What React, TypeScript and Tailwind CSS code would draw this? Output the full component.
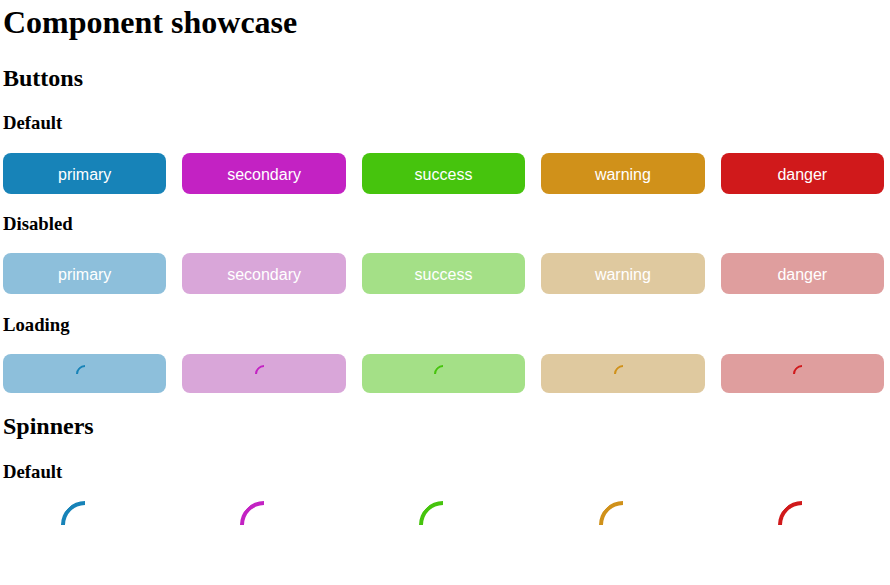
const variants = [
  { name: "primary", bg: "bg-[#1783b8]", soft: "bg-[#8dbfdb]", arc: "border-t-[#1783b8]" },
  { name: "secondary", bg: "bg-[#c322c3]", soft: "bg-[#d9a6d9]", arc: "border-t-[#c322c3]" },
  { name: "success", bg: "bg-[#46c40d]", soft: "bg-[#a4e087]", arc: "border-t-[#46c40d]" },
  { name: "warning", bg: "bg-[#d0911a]", soft: "bg-[#dfc99f]", arc: "border-t-[#d0911a]" },
  { name: "danger", bg: "bg-[#d0191b]", soft: "bg-[#df9e9e]", arc: "border-t-[#d0191b]" },
];

function Spinner({ arc, size }: { arc: string; size: "sm" | "lg" }) {
  const dims = size === "lg" ? "w-12 h-12 border-4" : "w-[18px] h-[18px] border-2";
  return <div className={`${dims} rounded-full border-transparent ${arc} -rotate-45`} />;
}

function Row({ children, className = "" }: { children: React.ReactNode; className?: string }) {
  return <div className={`grid grid-cols-5 gap-4 ${className}`}>{children}</div>;
}

export default function App() {
  const h3 = "text-[18.72px] leading-[19px] font-bold";
  const btn = "flex items-center justify-center rounded-lg text-white text-base font-['Liberation_Sans',Arial,sans-serif]";

  return (
    <div className="pl-[3px] pr-[6px] text-black font-['Liberation_Serif','Times_New_Roman',serif]">
      <h1 className="mt-[6px] text-[32px] leading-[32px] font-bold">Component showcase</h1>

      <h2 className="mt-[28px] text-2xl leading-6 font-bold">Buttons</h2>

      <h3 className={`mt-[23px] ${h3}`}>Default</h3>
      <Row className="mt-[21px]">
        {variants.map(v => (
          <button key={v.name} className={`${btn} ${v.bg} h-[41px] pt-[2px]`}>{v.name}</button>
        ))}
      </Row>

      <h3 className={`mt-[20px] ${h3}`}>Disabled</h3>
      <Row className="mt-[20px]">
        {variants.map(v => (
          <button key={v.name} disabled className={`${btn} ${v.soft} h-[41px] pt-[2px] text-[#fbfbfb]`}>{v.name}</button>
        ))}
      </Row>

      <h3 className={`mt-[21px] ${h3}`}>Loading</h3>
      <Row className="mt-[20px]">
        {variants.map(v => (
          <button key={v.name} disabled className={`${btn} ${v.soft} h-[39px]`}>
            <Spinner arc={v.arc} size="sm" />
          </button>
        ))}
      </Row>

      <h2 className="mt-[21px] text-2xl leading-6 font-bold">Spinners</h2>

      <h3 className={`mt-[24px] ${h3}`}>Default</h3>
      <Row className="mt-[20px]">
        {variants.map(v => (
          <div key={v.name} className="flex justify-center">
            <Spinner arc={v.arc} size="lg" />
          </div>
        ))}
      </Row>
    </div>
  );
}
